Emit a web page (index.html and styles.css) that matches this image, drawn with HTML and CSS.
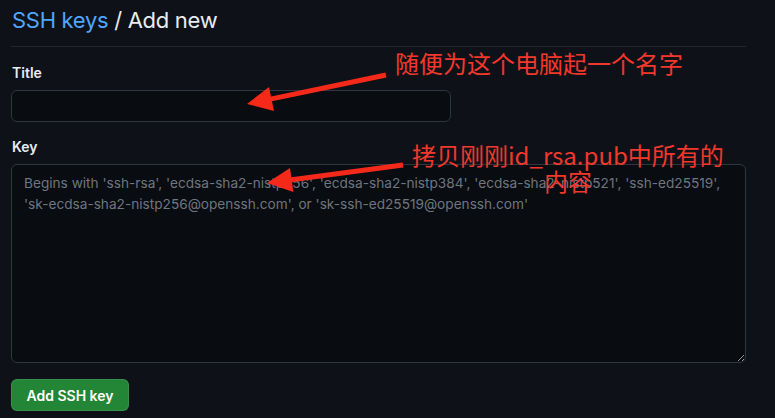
FILE: index.html
```html
<!DOCTYPE html>
<html lang="zh">
<head>
<meta charset="utf-8">
<title>SSH keys / Add new</title>
<link rel="stylesheet" href="styles.css">
</head>
<body>
<main class="page">
  <h1 class="heading"><a class="crumb" href="#">SSH keys</a> / Add new</h1>
  <form class="form">
    <label class="label" for="title">Title</label>
    <input class="input" id="title" type="text">
    <label class="label label-key" for="key">Key</label>
    <textarea class="textarea" id="key" placeholder="Begins with 'ssh-rsa', 'ecdsa-sha2-nistp256', 'ecdsa-sha2-nistp384', 'ecdsa-sha2-nistp521', 'ssh-ed25519', 'sk-ecdsa-sha2-nistp256@openssh.com', or 'sk-ssh-ed25519@openssh.com'"></textarea>
    <div class="actions"><button class="btn" type="button">Add SSH key</button></div>
  </form>
</main>
<div class="note note-1">随便为这个电脑起一个名字</div>
<div class="note note-2">拷贝刚刚id_rsa.pub中所有的<br>内容</div>
<svg class="arrows" width="775" height="418" viewBox="0 0 775 418" aria-hidden="true">
  <line x1="386" y1="75" x2="268" y2="99.6" stroke="#f5291a" stroke-width="5"/>
  <polygon points="247,104 269,87 274,111" fill="#f5291a"/>
  <line x1="403" y1="165" x2="288" y2="180.2" stroke="#f5291a" stroke-width="5"/>
  <polygon points="267,183 290,168 293.4,192" fill="#f5291a"/>
</svg>
</body>
</html>
```
FILE: styles.css
```css
html, body {
  margin: 0;
  padding: 0;
  background: #0e1117;
  height: 100%;
  overflow: hidden;
}
body {
  font-family: Inter, "Liberation Sans", sans-serif;
  color: #e6edf3;
}
.page {
  width: 735px;
  padding-left: 11px;
}
.heading {
  margin: 0;
  padding: 5px 0 11px 1px;
  font-size: 22px;
  letter-spacing: -0.3px;
  line-height: 30px;
  font-weight: 400;
  color: #e6edf3;
  border-bottom: 1px solid #21262d;
}
.crumb {
  color: #4fa6ff;
  text-decoration: none;
}
.form {
  display: flex;
  flex-direction: column;
  align-items: flex-start;
  padding-top: 16px;
}
.label {
  font-size: 14px;
  font-weight: 600;
  line-height: 20px;
  padding-left: 1px;
  margin-bottom: 7px;
  color: #e6edf3;
}
.label-key {
  margin-top: 15px;
}
.input {
  box-sizing: border-box;
  width: 440px;
  height: 32px;
  margin: 0;
  background: #090c10;
  border: 1px solid #30363d;
  border-radius: 6px;
  color: #e6edf3;
  font: 14px Inter, sans-serif;
  padding: 5px 12px;
}
.textarea {
  box-sizing: border-box;
  width: 735px;
  height: 199px;
  margin: 0;
  background: #090c10;
  border: 1px solid #30363d;
  border-radius: 6px;
  color: #e6edf3;
  font-family: Inter, "Liberation Sans", sans-serif;
  font-size: 13.65px;
  line-height: 20.5px;
  padding: 8px 12px;
  resize: both;
}
.textarea::placeholder {
  color: #6e7681;
  opacity: 1;
}
.actions {
  margin-top: 16px;
}
.btn {
  box-sizing: border-box;
  width: 118px;
  height: 32px;
  background: #238636;
  border: 1px solid rgba(240,246,252,0.1);
  border-radius: 6px;
  color: #ffffff;
  font-family: Inter, "Liberation Sans", sans-serif;
  font-size: 14px;
  font-weight: 600;
  padding: 0;
}
.note {
  position: absolute;
  color: #f2382b;
  font-family: "Noto Sans CJK SC", sans-serif;
  font-size: 24px;
  line-height: 26px;
  white-space: nowrap;
}
.note-1 {
  left: 395px;
  top: 50px;
}
.note-2 {
  left: 412px;
  top: 142px;
  text-align: center;
}
.arrows {
  position: absolute;
  left: 0;
  top: 0;
}
```
